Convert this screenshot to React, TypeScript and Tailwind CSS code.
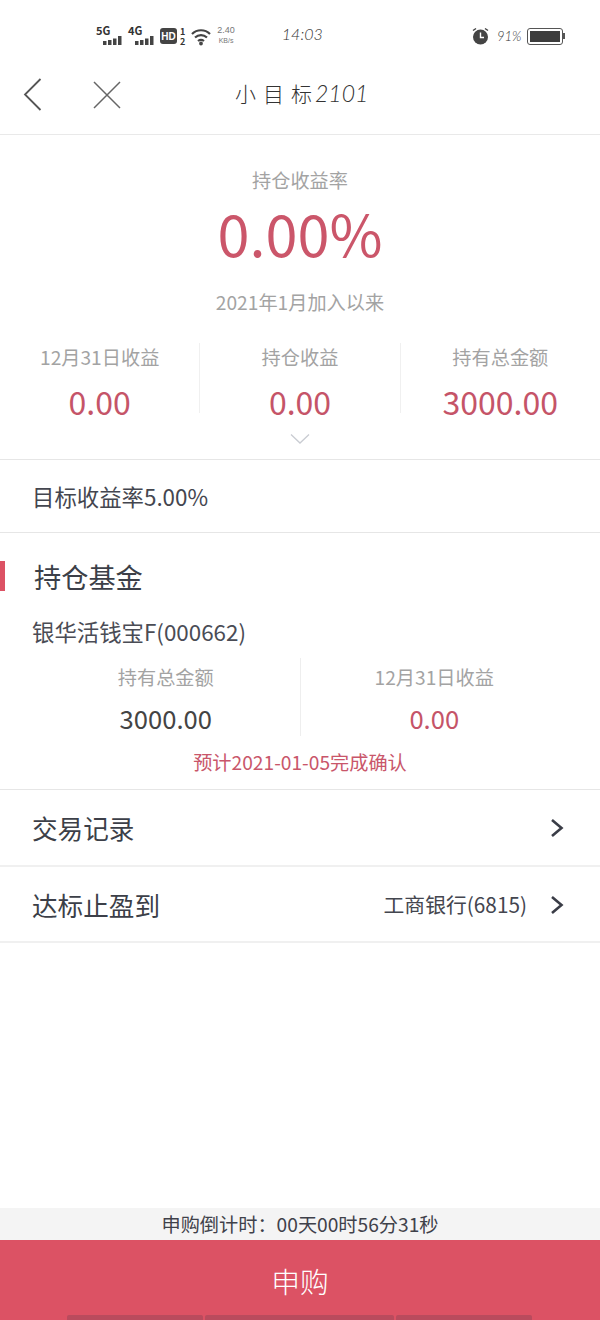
import React from 'react';

const cjk = { fontFamily: '"Noto Sans CJK SC", "Noto Sans", sans-serif' };
const thin = { fontFamily: 'Lato, "Liberation Sans", sans-serif', fontWeight: 300 };

function SignalIcon({ label }: { label: string }) {
  return (
    <div className="relative w-[27px] h-[20px]">
      <span className="absolute left-0 top-[-2px] text-[11px] leading-[12px] font-bold text-[#333]">{label}</span>
      <svg className="absolute left-[7px] top-[9px]" width="20" height="11" viewBox="0 0 20 11" fill="#444">
        <rect x="0" y="6" width="3.5" height="4" />
        <rect x="5" y="5" width="3.5" height="5" />
        <rect x="10" y="3.5" width="3.5" height="6.5" />
        <rect x="15" y="1" width="3.5" height="9" />
      </svg>
    </div>
  );
}

function StatusBar() {
  return (
    <div className="h-[68px] relative flex items-start pt-[26px] pl-[96px]">
      <SignalIcon label="5G" />
      <div className="w-[5px]" />
      <SignalIcon label="4G" />
      <svg className="ml-[5px]" width="18" height="19" viewBox="0 0 18 19">
        <rect x="0" y="2" width="17" height="16" rx="3" fill="#444" />
        <text x="8.5" y="14" textAnchor="middle" fontSize="10" fontWeight="700" fill="#fff" fontFamily="Liberation Sans">HD</text>
      </svg>
      <div className="flex flex-col text-[9px] leading-[9px] font-bold text-[#333] ml-[2px] mt-[1px] gap-[1px] items-center">
        <span>1</span>
        <span>2</span>
      </div>
      <svg className="ml-[6px] mt-[1px]" width="22" height="19" viewBox="0 0 22 19" fill="none" stroke="#444" strokeWidth="2.2">
        <path d="M1 7c5-5 13-5 18 0" />
        <path d="M4 10.500c3.500-3.200 8.500-3.200 12 0" />
        <path d="M7 14c2-1.600 4-1.600 6 0" />
        <circle cx="10" cy="16.500" r="0.8" fill="#444" />
      </svg>
      <div className="flex flex-col items-center ml-[4px] mt-[-1px] text-[#777]">
        <span className="text-[9px] leading-[11px]" style={{ fontFamily: '"Liberation Sans", sans-serif' }}>2.40</span>
        <span className="text-[7px] leading-[10px]" style={{ fontFamily: '"Liberation Sans", sans-serif' }}>KB/s</span>
      </div>
      <span className="ml-[47px] mt-[-2px] text-[16px] leading-[20px] italic text-[#333]" style={thin}>14:03</span>
      <div className="absolute left-[472px] top-[27px] flex items-center">
        <svg width="17" height="18" viewBox="0 0 17 18">
          <circle cx="8.500" cy="10" r="7.500" fill="#444" />
          <path d="M8.500 5.500v5h3.500" stroke="#fff" strokeWidth="1.400" fill="none" />
          <path d="M1 3.500l3-2M16 3.500l-3-2" stroke="#444" strokeWidth="1.500" />
        </svg>
        <span className="ml-[8px] w-[30px] text-[13px] leading-[18px] italic text-[#333]" style={thin}>91%</span>
        <div className="w-[36px] h-[17px] rounded-[3px] border border-[#555] p-[2px]">
          <div className="w-full h-full bg-[#3d3d3d]" />
        </div>
        <div className="w-[2px] h-[6px] bg-[#555]" />
      </div>
    </div>
  );
}

function NavBar() {
  return (
    <div className="h-[67px] border-b border-[#e9e9e9] flex items-center relative">
      <svg className="ml-[23px] mb-[13px]" width="20" height="34" viewBox="0 0 20 34" fill="none" stroke="#555" strokeWidth="1.800">
        <path d="M17.500 1 L2 16.500 L17.500 32" />
      </svg>
      <svg className="ml-[49px] mb-[13px]" width="30" height="30" viewBox="0 0 30 30" fill="none" stroke="#666" strokeWidth="1.500">
        <path d="M2 2 L28 28 M28 2 L2 28" />
      </svg>
      <div className="absolute left-[235px] top-[10px] flex items-center text-[#333] text-[21px] leading-[30px]">
        <span className="tracking-[7px] font-light" style={cjk}>小目标</span>
        <span className="italic text-[23px] ml-[-4px]" style={thin}>2101</span>
      </div>
    </div>
  );
}

function SummaryCol({ label, value, withDivider }: { label: string; value: string; withDivider?: boolean }) {
  return (
    <div className={`flex-1 h-[70px] flex flex-col items-center ${withDivider ? 'border-r border-[#f0f0f0]' : ''}`}>
      <span className="text-[19.200px] leading-[28px] text-[#a3a3a3]">{label}</span>
      <span className="text-[32px] leading-[32px] mt-[14px] text-[#c55468]">{value}</span>
    </div>
  );
}

function FundCol({ label, value, red, withDivider }: { label: string; value: string; red?: boolean; withDivider?: boolean }) {
  return (
    <div className={`flex-1 h-[78px] flex flex-col items-center ${withDivider ? 'border-r border-[#eeeeee]' : ''}`}>
      <span className="text-[19.200px] leading-[28px] mt-[5px] text-[#a3a3a3]">{label}</span>
      <span className={`text-[25.600px] leading-[36px] mt-[9px] ${red ? 'text-[#c55468]' : 'text-[#444]'}`}>{value}</span>
    </div>
  );
}

function Chevron() {
  return (
    <svg className="mt-[2px]" width="14" height="20" viewBox="0 0 14 20" fill="none" stroke="#3a3d47" strokeWidth="2.600">
      <path d="M2 2 L11.500 10 L2 18" />
    </svg>
  );
}

function LinkRow({ title, extra }: { title: string; extra?: string }) {
  return (
    <div className="h-[76.500px] border-b-2 border-[#f0f0f0] flex items-center pl-[32px] pr-[36px]">
      <span className="text-[25.600px] text-[#3c3f48] mt-[2px]">{title}</span>
      <div className="flex-1" />
      {extra && <span className="text-[20.800px] text-[#44464f] mr-[23px] mt-[2px]">{extra}</span>}
      <Chevron />
    </div>
  );
}

export default function App() {
  return (
    <div className="w-[600px] h-[1320px] bg-white flex flex-col overflow-hidden relative" style={cjk}>
      <StatusBar />
      <NavBar />

      {/* 收益概览 */}
      <div className="h-[325px] border-b border-[#e6e6e6] flex flex-col items-center">
        <span className="text-[19.200px] leading-[28px] mt-[31px] text-[#a3a3a3]">持仓收益率</span>
        <span className="text-[57.600px] leading-[72px] mt-[2px] text-[#cb566a] font-normal">0.00%</span>
        <span className="text-[19.200px] leading-[28px] mt-[20px] text-[#a3a3a3]">2021年1月加入以来</span>
        <div className="w-full flex mt-[27px]">
          <SummaryCol label="12月31日收益" value="0.00" withDivider />
          <SummaryCol label="持仓收益" value="0.00" withDivider />
          <SummaryCol label="持有总金额" value="3000.00" />
        </div>
        <svg className="mt-[20px]" width="20" height="12" viewBox="0 0 20 12" fill="none" stroke="#c9ccd2" strokeWidth="1.300">
          <path d="M1 1.500 L10 10 L19 1.500" />
        </svg>
      </div>

      <div className="h-[73px] border-b border-[#e6e6e6] flex items-center pl-[32px]">
        <span className="text-[22.400px] text-[#44464f] mt-[2px]">目标收益率5.00%</span>
      </div>

      {/* 持仓基金 */}
      <div className="h-[257px] border-b border-[#e6e6e6] flex flex-col">
        <div className="flex items-center h-[30px] mt-[28px]">
          <div className="w-[5px] h-[30px] bg-[#dc5264]" />
          <span className="ml-[29px] text-[27.200px] leading-[30px] text-[#3c3f48]">持仓基金</span>
        </div>
        <span className="ml-[32px] mt-[24px] text-[22.400px] leading-[32px] text-[#4a4c55]">银华活钱宝F(000662)</span>
        <div className="flex mt-[11px] px-[32px]">
          <FundCol label="持有总金额" value="3000.00" withDivider />
          <FundCol label="12月31日收益" value="0.00" red />
        </div>
        <span className="text-center text-[19.200px] leading-[26px] mt-[13px] text-[#c9566a]">预计2021-01-05完成确认</span>
      </div>

      <LinkRow title="交易记录" />
      <LinkRow title="达标止盈到" extra="工商银行(6815)" />

      <div className="flex-1" />

      {/* 底部申购 */}
      <div className="h-[32px] bg-[#f4f4f4] flex items-center justify-center">
        <span className="text-[19.200px] leading-[32px] text-[#3f414a]">申购倒计时：00天00时56分31秒</span>
      </div>
      <div className="h-[80px] bg-[#dc5264] flex items-center justify-center">
        <span className="text-[28.800px] text-white font-light mt-[2px]">申购</span>
      </div>

      {/* 底部手势条 */}
      <div className="absolute left-[67px] bottom-0 flex gap-[2px]">
        <div className="w-[136px] h-[5px] bg-[#b94b5d] rounded-t-[2px]" />
        <div className="w-[189px] h-[5px] bg-[#b94b5d] rounded-t-[2px]" />
        <div className="w-[136px] h-[5px] bg-[#b94b5d] rounded-t-[2px]" />
      </div>
    </div>
  );
}
